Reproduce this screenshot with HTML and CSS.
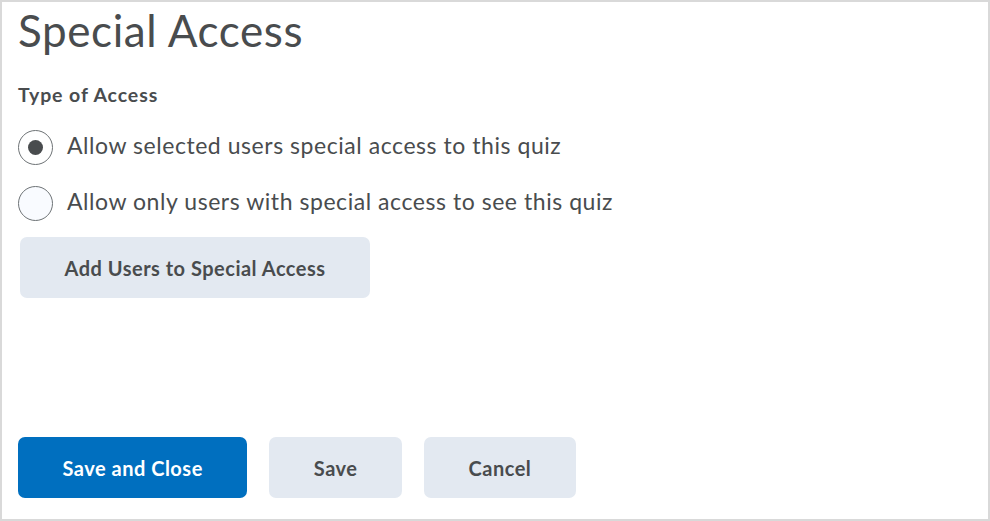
FILE: index.html
```html
<!DOCTYPE html>
<html lang="en">
<head>
<meta charset="utf-8">
<title>Special Access</title>
<link rel="stylesheet" href="styles.css">
</head>
<body>
<div class="frame">
  <h1 class="title">Special Access</h1>
  <div class="section-label">Type of Access</div>
  <label class="radio-row">
    <span class="radio checked"></span>
    <span class="radio-text">Allow selected users special access to this quiz</span>
  </label>
  <label class="radio-row second">
    <span class="radio"></span>
    <span class="radio-text">Allow only users with special access to see this quiz</span>
  </label>
  <button class="btn btn-secondary btn-add">Add Users to Special Access</button>
  <div class="actions">
    <button class="btn btn-primary">Save and Close</button>
    <button class="btn btn-secondary">Save</button>
    <button class="btn btn-secondary">Cancel</button>
  </div>
</div>
</body>
</html>
```

FILE: styles.css
```css
html, body {
  margin: 0;
  padding: 0;
  background: #ffffff;
}

body {
  font-family: Lato, "Open Sans", sans-serif;
  color: #494c4e;
}

.frame {
  box-sizing: border-box;
  width: 990px;
  height: 521px;
  border: 2px solid #d9d9d9;
  padding: 2px 16px 0 16px;
  display: flex;
  flex-direction: column;
  align-items: flex-start;
}

.title {
  margin: 0;
  font-size: 44px;
  line-height: 52px;
  font-weight: 400;
  letter-spacing: 0.6px;
  color: #494c4e;
}

.section-label {
  margin-top: 28px;
  font-size: 19.5px;
  line-height: 22px;
  font-weight: 700;
  letter-spacing: 0.9px;
}

.radio-row {
  margin-top: 24px;
  display: flex;
  align-items: center;
  height: 34px;
}

.radio-row.second {
  margin-top: 22px;
}

.radio {
  box-sizing: border-box;
  width: 35px;
  height: 35px;
  border-radius: 50%;
  border: 1.5px solid #6e7376;
  background: #f9fbff;
  display: flex;
  align-items: center;
  justify-content: center;
  flex: none;
}

.radio.checked {
  background: #ffffff;
}

.radio.checked::after {
  content: "";
  width: 15px;
  height: 15px;
  border-radius: 50%;
  background: #494c4e;
}

.radio-text {
  margin-left: 14px;
  font-size: 23px;
  line-height: 30px;
  letter-spacing: 0.55px;
  padding-bottom: 4px;
}

.btn {
  box-sizing: border-box;
  height: 61px;
  border: none;
  border-radius: 7px;
  padding: 0 44.5px;
  font-family: Lato, "Open Sans", sans-serif;
  font-size: 20px;
  font-weight: 700;
  letter-spacing: 0.5px;
  cursor: pointer;
}

.btn-secondary {
  background: #e3e9f1;
  color: #494c4e;
}

.btn-primary {
  background: #006fbf;
  color: #ffffff;
}

.btn-add {
  margin-top: 17px;
  margin-left: 2px;
}

.actions {
  margin-top: 139px;
  display: flex;
  gap: 22px;
}
```
